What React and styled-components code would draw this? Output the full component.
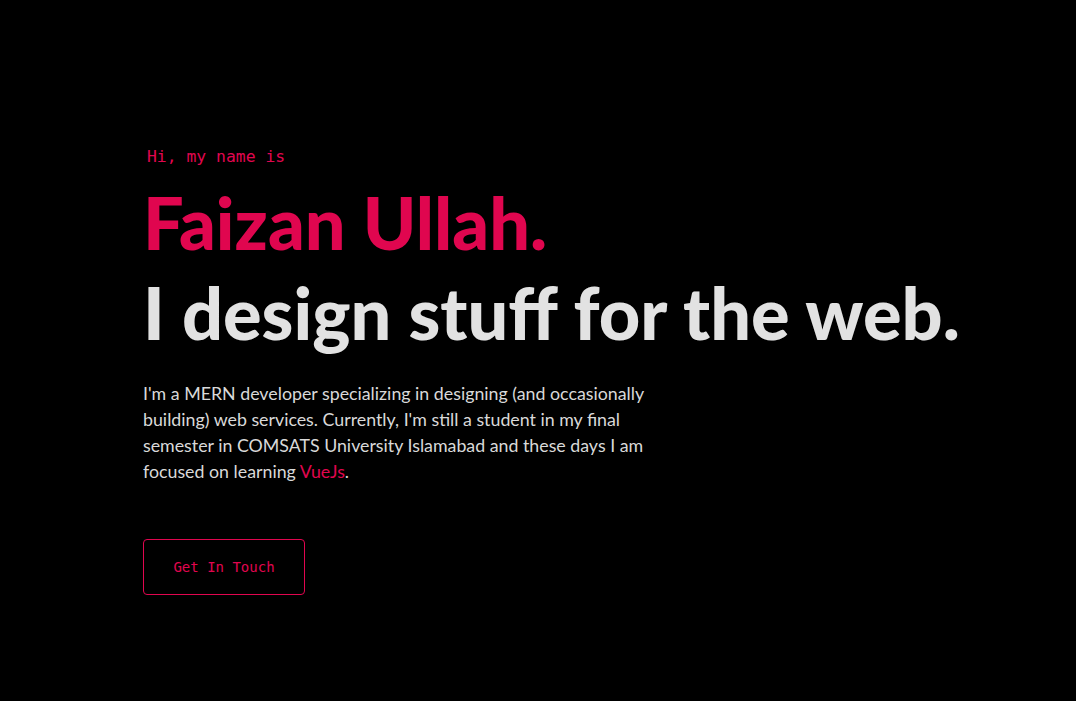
import styled, { createGlobalStyle } from "styled-components";

const GlobalStyle = createGlobalStyle`
    html, body {
        margin: 0;
        padding: 0;
        background: #000;
    }
`

function App() {
    return (
        <>
            <GlobalStyle />
            <Hero>
                <Greeting>Hi, my name is</Greeting>
                <Name>Faizan Ullah.</Name>
                <Tagline>I design stuff for the web.</Tagline>
                <Intro>
                    I'm a MERN developer specializing in designing (and occasionally
                    building) web services. Currently, I'm still a student in my final
                    semester in COMSATS University Islamabad and these days I am
                    focused on learning <Accent>VueJs</Accent>.
                </Intro>
                <ContactButton>Get In Touch</ContactButton>
            </Hero>
        </>
    )
}

const Hero = styled.section`
    min-height: 701px;
    box-sizing: border-box;
    padding: 145px 0 0 143px;
    display: flex;
    flex-direction: column;
    align-items: flex-start;
    background: #000;
    font-family: Lato, "Liberation Sans", sans-serif;
`

const Greeting = styled.p`
    margin: 0 0 0 4px;
    font-family: "DejaVu Sans Mono", "Liberation Mono", monospace;
    font-size: 16.4px;
    line-height: 24px;
    color: #e0064f;
`

const Name = styled.h1`
    margin: 8px 0 0;
    font-size: 72px;
    line-height: 90px;
    font-weight: 900;
    color: #e0064f;
`

const Tagline = styled.h2`
    margin: 0;
    font-size: 72px;
    line-height: 90px;
    font-weight: 900;
    color: #e2e2e2;
`

const Intro = styled.p`
    margin: 23px 0 0;
    max-width: 515px;
    font-size: 17.8px;
    line-height: 26px;
    color: #d9d9d9;
`

const Accent = styled.span`
    color: #e0064f;
`

const ContactButton = styled.button`
    margin-top: 55px;
    width: 162px;
    height: 56px;
    background: transparent;
    border: 1px solid #e0064f;
    border-radius: 4px;
    color: #e0064f;
    font-family: "DejaVu Sans Mono", "Liberation Mono", monospace;
    font-size: 14px;
    cursor: pointer;
`

export default App
